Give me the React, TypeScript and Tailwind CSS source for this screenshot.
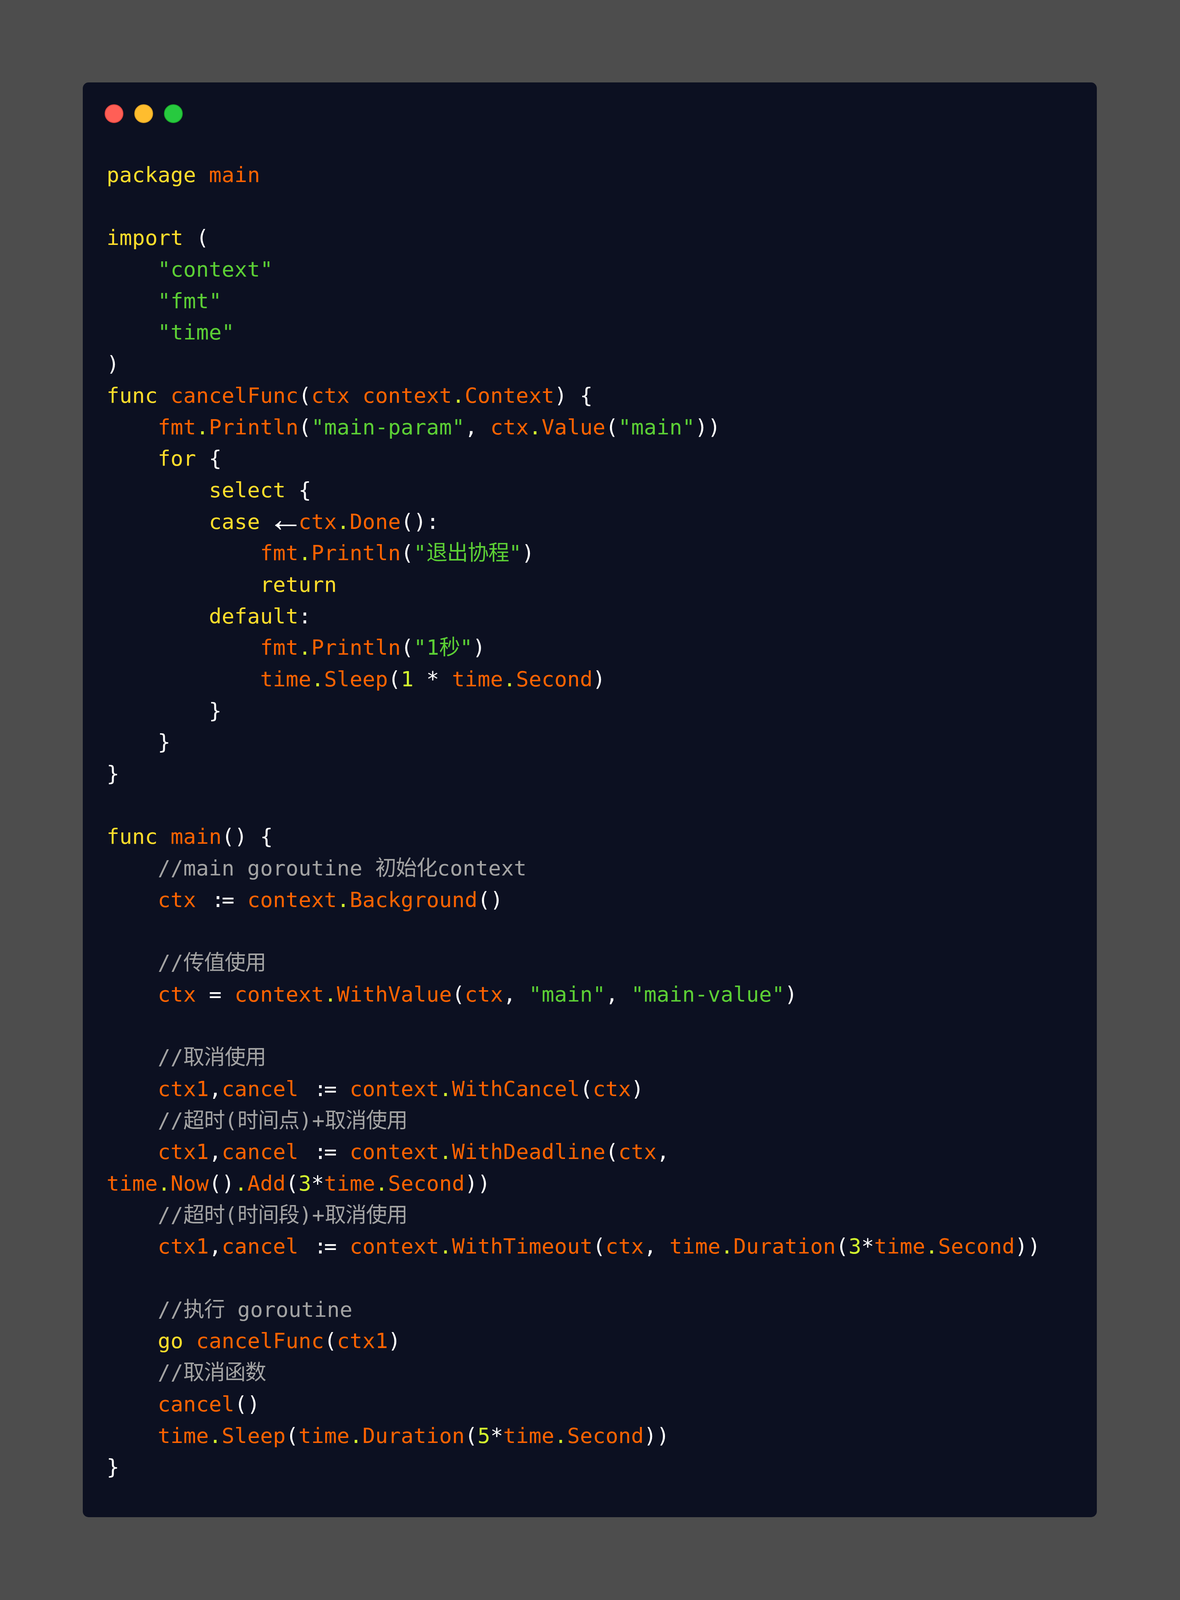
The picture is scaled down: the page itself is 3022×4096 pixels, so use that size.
const cls: Record<string, string> = {
  k: "text-[#ffdd2b]",
  o: "text-[#ff6300]",
  s: "text-[#5ccf35]",
  n: "text-[#d3f52e]",
  w: "text-white",
  c: "text-[#a3a3a3]",
};

type Tok = [string, string];
const F = (s: string): Tok[] => {
  const out: Tok[] = [];
  s.split("~").forEach((p) => {
    if (p) out.push([p[0], p.slice(1)]);
  });
  return out;
};

const lines: string[] = [
  "~kpackage ~omain",
  "",
  "~kimport ~w(",
  "~s    \"context\"",
  "~s    \"fmt\"",
  "~s    \"time\"",
  "~w)",
  "~kfunc ~ocancelFunc~w(~octx context~n.~oContext~w) {",
  "~o    fmt~n.~oPrintln~w(~s\"main-param\"~w, ~octx~n.~oValue~w(~s\"main\"~w))",
  "~k    for ~w{",
  "~k        select ~w{",
  "~k        case ~w←~octx~n.~oDone~w():",
  "~o            fmt~n.~oPrintln~w(~s\"退出协程\"~w)",
  "~k            return",
  "~k        default~w:",
  "~o            fmt~n.~oPrintln~w(~s\"1秒\"~w)",
  "~o            time~n.~oSleep~w(~n1 ~w* ~otime~n.~oSecond~w)",
  "~w        }",
  "~w    }",
  "~w}",
  "",
  "~kfunc ~omain~w() {",
  "~c    //main goroutine 初始化context",
  "~o    ctx ~w:= ~ocontext~n.~oBackground~w()",
  "",
  "~c    //传值使用",
  "~o    ctx ~w= ~ocontext~n.~oWithValue~w(~octx~w, ~s\"main\"~w, ~s\"main-value\"~w)",
  "",
  "~c    //取消使用",
  "~o    ctx1~w,~ocancel ~w:= ~ocontext~n.~oWithCancel~w(~octx~w)",
  "~c    //超时(时间点)+取消使用",
  "~o    ctx1~w,~ocancel ~w:= ~ocontext~n.~oWithDeadline~w(~octx~w,",
  "~otime~n.~oNow~w()~n.~oAdd~w(~n3~w*~otime~n.~oSecond~w))",
  "~c    //超时(时间段)+取消使用",
  "~o    ctx1~w,~ocancel ~w:= ~ocontext~n.~oWithTimeout~w(~octx~w, ~otime~n.~oDuration~w(~n3~w*~otime~n.~oSecond~w))",
  "",
  "~c    //执行 goroutine",
  "~w    ~kgo ~ocancelFunc~w(~octx1~w)",
  "~c    //取消函数",
  "~o    cancel~w()",
  "~o    time~n.~oSleep~w(~otime~n.~oDuration~w(~n5~w*~otime~n.~oSecond~w))",
  "~w}",
];

function Run({ text }: { text: string }) {
  const parts = text.split(/([\u4e00-\u9fff]+|←|:=)/);
  return (
    <>
      {parts.map((p, i) => {
        if (!p) return null;
        if (p === "←")
          return (
            <span
              key={i}
              className="relative top-[6px] -left-[13px] inline-block w-[65.5px] text-center align-baseline font-['Liberation_Sans',sans-serif] text-[92px] leading-[0] tracking-normal"
            >
              {p}
            </span>
          );
        if (p === ":=")
          return (
            <span key={i}>
              <span className="relative left-[7px]">:</span>=
            </span>
          );
        if (/[\u4e00-\u9fff]/.test(p))
          return (
            <span key={i} className="tracking-[-1.2px]">
              {p}
            </span>
          );
        return <span key={i}>{p}</span>;
      })}
    </>
  );
}

export default function App() {
  return (
    <div className="min-h-[4096px] bg-[#4d4d4d] pl-[212px] pr-[213px] pt-[211px]">
      <div className="rounded-[15px] bg-[#0c1021] pb-[87.5px] pl-[56px] pt-[56px]">
        <div className="flex gap-[28.5px]">
          <div className="h-[47.5px] w-[47.5px] rounded-full border-2 border-[#e0443e] bg-[#ff5f56]" />
          <div className="h-[47.5px] w-[47.5px] rounded-full border-2 border-[#dea123] bg-[#ffbd2e]" />
          <div className="h-[47.5px] w-[47.5px] rounded-full border-2 border-[#1aab29] bg-[#27c93f]" />
        </div>
        <div className="mt-[93.5px] pl-[5px] font-['DejaVu_Sans_Mono','Noto_Sans_CJK_SC',monospace] text-[54px] leading-[80.7px] tracking-[0.25px] whitespace-pre">
          {lines.map((l, i) => (
            <div key={i} className="h-[80.7px]">
              {F(l).map(([c, t], j) => (
                <span key={j} className={cls[c]}>
                  <Run text={t} />
                </span>
              ))}
            </div>
          ))}
        </div>
      </div>
    </div>
  );
}
